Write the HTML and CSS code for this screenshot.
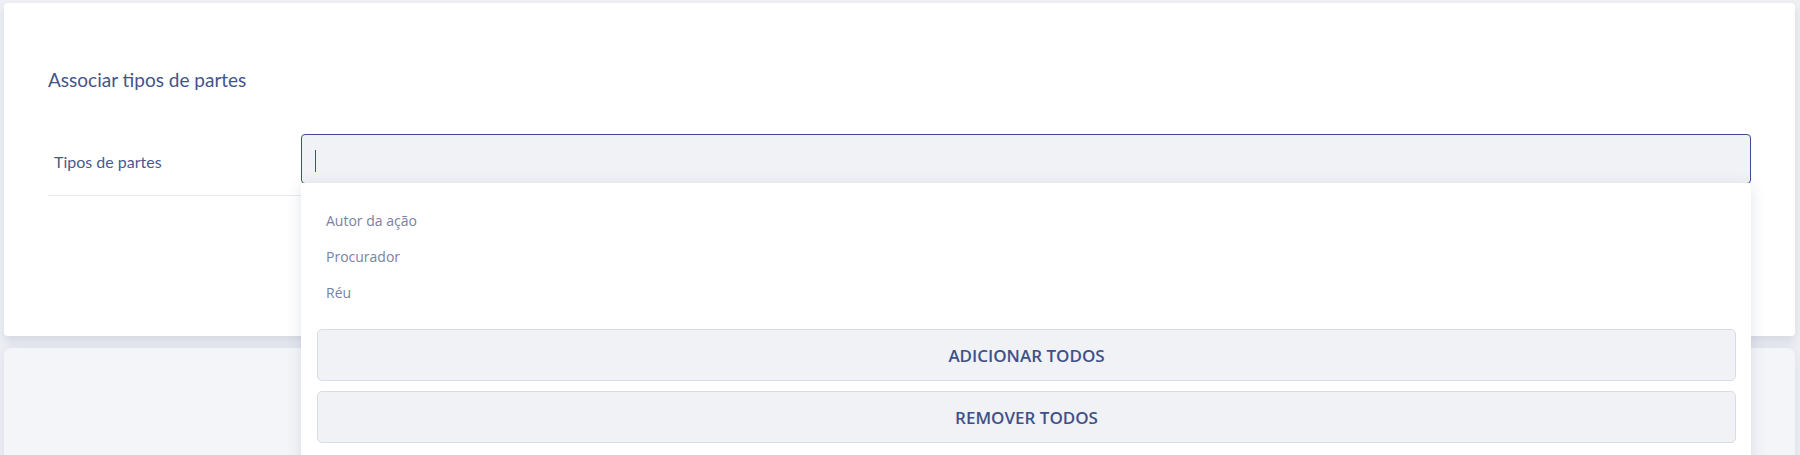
FILE: index.html
```html
<!DOCTYPE html>
<html lang="pt">
<head>
  <meta charset="UTF-8">
  <title>Associar tipos de partes</title>
  <link rel="stylesheet" href="styles.css">
</head>
<body>

  <!-- Card principal -->
  <div class="card">
    <h2 class="card-title">Associar tipos de partes</h2>

    <div class="field-row">
      <label class="field-label">Tipos de partes</label>
      <div class="select-wrap">
        <div class="select-input"><span class="caret"></span></div>

        <!-- Lista aberta -->
        <div class="dropdown">
          <ul class="options">
            <li>Autor da ação</li>
            <li>Procurador</li>
            <li>Réu</li>
          </ul>
          <div class="actions">
            <button class="action-btn">ADICIONAR TODOS</button>
            <button class="action-btn">REMOVER TODOS</button>
          </div>
        </div>
      </div>
    </div>
  </div>

  <div class="card card-next"></div>

</body>
</html>
```

FILE: styles.css
```css
body {
  margin: 0;
  background: #eef0f5;
  font-family: 'Lato', 'Open Sans', sans-serif;
  overflow: hidden;
}

.card {
  background: #fff;
  margin: 3px 5px 0 4px;
  height: 268px;
  padding: 65px 44px 0 44px;
  border-radius: 4px;
  box-shadow: 0 5px 10px rgba(70, 80, 120, 0.14);
}

.card-next {
  background: #f4f5f8;
  margin-top: 12px;
  height: 200px;
  padding: 0;
  border-radius: 8px;
  box-shadow: 0 0 14px rgba(70, 80, 120, 0.1);
}

.card-title {
  margin: 0;
  font-size: 19px;
  font-weight: 400;
  line-height: 24px;
  color: #44548b;
}

.field-row {
  display: flex;
  align-items: center;
  margin-top: 42px;
  padding-bottom: 11px;
  border-bottom: 1px solid #e7e8ee;
}

.field-label {
  width: 253px;
  flex-shrink: 0;
  box-sizing: border-box;
  padding: 4px 0 0 6px;
  font-size: 16px;
  color: #4a5a8e;
}

.select-wrap {
  position: relative;
  flex: 1;
}

.select-input {
  height: 50px;
  box-sizing: border-box;
  background: #f1f2f6;
  border: 1px solid #3a5191;
  border-radius: 4px;
  padding: 15px 13px;
}

.caret {
  display: block;
  width: 1px;
  height: 22px;
  background: #3a5191;
}

.dropdown {
  position: absolute;
  top: 49px;
  left: 0;
  right: 0;
  background: #fff;
  padding: 20px 15px 20px 16px;
  box-shadow: 0 3px 14px rgba(60, 70, 110, 0.14);
  z-index: 5;
}

.options {
  list-style: none;
  margin: 0;
  padding: 0;
}

.options li {
  height: 36px;
  line-height: 36px;
  padding-left: 9px;
  font-family: 'Open Sans', sans-serif;
  font-size: 14px;
  color: #7a81a0;
}

.actions {
  display: flex;
  flex-direction: column;
  gap: 10px;
  margin-top: 18px;
}

.action-btn {
  height: 52px;
  background: #f1f2f6;
  border: 1px solid #d9dce6;
  border-radius: 5px;
  font-family: 'Open Sans', sans-serif;
  font-size: 17px;
  font-weight: 600;
  color: #3e5189;
  cursor: pointer;
}
```
